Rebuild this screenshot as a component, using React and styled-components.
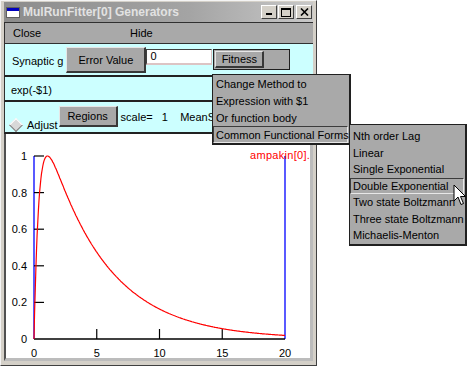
import React from 'react'
import styled, { createGlobalStyle } from 'styled-components'

const GlobalStyle = createGlobalStyle`
  html, body {
    margin: 0;
    padding: 0;
    background: #fff;
  }
  body {
    font-family: "Liberation Sans", Arial, sans-serif;
    font-size: 11px;
    color: #000;
  }
`

const Screen = styled.div`
  position: relative;
  width: 467px;
  height: 367px;
  overflow: hidden;
`

const Window = styled.div`
  width: 317px;
  height: 366px;
  box-sizing: border-box;
  background: #d4d0c8;
  border: 1px solid;
  border-color: #f4f4f4 #404040 #404040 #f4f4f4;
  padding: 1px 3px 0 3px;
  display: flex;
  flex-direction: column;
`

const TitleBar = styled.div`
  height: 20px;
  flex: none;
  display: flex;
  align-items: center;
  padding: 0 1px 0 2px;
  background: linear-gradient(to right, #8c8c8c, #a4a4a4 60%, #c8c8c8);
`

const TitleText = styled.span`
  margin-left: 3px;
  flex: 1;
  font-weight: bold;
  font-size: 12px;
  color: #e2e2e2;
  white-space: nowrap;
`

const CapButton = styled.div`
  width: 14px;
  height: 12px;
  margin-left: ${(p) => p.$gap || 0}px;
  background: #d4d0c8;
  border: 1px solid;
  border-color: #ffffff #404040 #404040 #ffffff;
  display: flex;
  align-items: center;
  justify-content: center;
`

const MenuBar = styled.div`
  height: 20px;
  flex: none;
  display: flex;
  align-items: center;
  background: #a9a9a9;
  border: 1px solid #303030;
  border-right: none;
`

const MenuItem = styled.div`
  width: 117px;
  padding-left: 8px;
  box-sizing: border-box;
`

const Panel = styled.div`
  height: ${(p) => p.$h}px;
  flex: none;
  display: flex;
  align-items: flex-start;
  background: #ccffff;
  border-left: 1px solid #303030;
  border-bottom: 2px solid #222;
  padding-left: ${(p) => p.$pad}px;
  overflow: hidden;
  white-space: nowrap;
`

const Label = styled.span`
  display: block;
  line-height: 13px;
  margin-top: ${(p) => p.$top || 0}px;
  margin-left: ${(p) => p.$left || 0}px;
  white-space: pre;
`

const Button = styled.div`
  width: ${(p) => p.$w}px;
  height: ${(p) => p.$hgt}px;
  margin-top: ${(p) => p.$top || 0}px;
  margin-left: ${(p) => p.$left || 0}px;
  box-sizing: border-box;
  background: #a8a8a8;
  border-style: solid;
  border-width: 1px 2px 2px 1px;
  border-color: #e6e6e6 #383838 #383838 #e6e6e6;
  display: flex;
  align-items: center;
  justify-content: center;
  flex: none;
`

const Input = styled.div`
  width: 66px;
  height: 16px;
  margin-top: 5px;
  box-sizing: border-box;
  background: #fff;
  border-style: solid;
  border-width: 1px 1px 2px 1px;
  border-color: #404040 #d8c0c0 #dcc4c4 #404040;
  padding-left: 3px;
  line-height: 13px;
  flex: none;
`

const OptionBox = styled.div`
  width: 77px;
  height: 21px;
  margin-top: 5px;
  margin-left: 1px;
  box-sizing: border-box;
  background: #a8a8a8;
  border: 1px solid #202020;
  padding: 1px;
  flex: none;
`

const Diamond = styled.div`
  width: 13px;
  height: 13px;
  margin-top: 16px;
  margin-left: 4px;
  display: flex;
  align-items: center;
  justify-content: center;
  flex: none;
  &::before {
    content: '';
    width: 8px;
    height: 8px;
    transform: rotate(45deg);
    background: #d8d8d8;
    border: 1px solid;
    border-color: #ffffff #808080 #808080 #ffffff;
  }
`

const PlotFrame = styled.div`
  height: 224px;
  flex: none;
  background: #fff;
  border-left: 2px solid #505050;
  border-right: 3px solid #bcbcbc;
  border-bottom: 3px solid #bcbcbc;
  overflow: hidden;
`

const Popup = styled.div`
  position: absolute;
  left: ${(p) => p.$x}px;
  top: ${(p) => p.$y}px;
  width: ${(p) => p.$w}px;
  box-sizing: border-box;
  background: #a9a9a9;
  border: 1px solid #202020;
  border-right-width: 2px;
  border-bottom-width: 2px;
  padding-top: ${(p) => p.$pt}px;
  white-space: nowrap;
  overflow: hidden;
`

const PopupItem = styled.div`
  height: ${(p) => p.$h}px;
  box-sizing: border-box;
  margin-right: 1px;
  padding-left: 2px;
  display: flex;
  align-items: center;
  border: 1px solid transparent;
  ${(p) =>
    p.$active &&
    `
    border-color: #3c3c3c #e8e8e8 #e8e8e8 #3c3c3c;
  `}
`

const Cursor = styled.svg`
  position: absolute;
  left: 453px;
  top: 184px;
`

const yTicks = [
  { v: 1, label: '1' },
  { v: 0.8, label: '0.8' },
  { v: 0.6, label: '0.6' },
  { v: 0.4, label: '0.4' },
  { v: 0.2, label: '0.2' },
  { v: 0, label: '0' },
]
const xTicks = [0, 5, 10, 15, 20]

const X0 = 34
const XS = (285 - 34) / 20
const Y0 = 339
const YS = 183

const tauR = 0.4
const tauD = 4.7
const dbl = (t) => Math.exp(-t / tauD) - Math.exp(-t / tauR)
const tPeak = (Math.log(tauD / tauR) * tauD * tauR) / (tauD - tauR)
const peak = dbl(tPeak)

const curve = []
for (let i = 0; i <= 400; i++) {
  const t = i * 0.05
  curve.push(`${(X0 + t * XS).toFixed(1)},${(Y0 - (dbl(t) / peak) * YS).toFixed(1)}`)
}

const Chart = () => (
  <svg width="304" height="224" style={{ display: 'block' }}>
    <g transform="translate(-6,-134)" fontFamily="Liberation Sans, Arial, sans-serif" fontSize="11">
      <line x1={X0} y1={156} x2={X0} y2={Y0} stroke="#0000ff" strokeWidth="1.3" />
      <line x1={285} y1={156} x2={285} y2={Y0} stroke="#0000ff" strokeWidth="1.3" />
      <line x1={X0} y1={Y0} x2={285} y2={Y0} stroke="#000" strokeWidth="1.3" />
      {yTicks.map((t) => (
        <g key={t.label}>
          {t.v > 0 && (
            <line x1={X0} y1={Y0 - t.v * YS} x2={X0 + 10} y2={Y0 - t.v * YS} stroke="#000" strokeWidth="1.2" />
          )}
          <text x={27} y={Y0 - t.v * YS + 4} textAnchor="end">
            {t.label}
          </text>
        </g>
      ))}
      {xTicks.map((v) => (
        <g key={v}>
          {v > 0 && v < 20 && (
            <line x1={X0 + v * XS} y1={Y0 - 10} x2={X0 + v * XS} y2={Y0} stroke="#000" strokeWidth="1.2" />
          )}
          <text x={X0 + v * XS} y={356.5} textAnchor="middle">
            {v}
          </text>
        </g>
      ))}
      <polyline points={curve.join(' ')} fill="none" stroke="#ff0000" strokeWidth="1.2" />
      <text x={250} y={159} fill="#ff0000" letterSpacing="0.3">
        ampakin[0].g
      </text>
    </g>
  </svg>
)

const WinIcon = () => (
  <svg width="14" height="11" style={{ flex: 'none' }}>
    <rect x="0.5" y="0.5" width="13" height="10" fill="#fff" stroke="#606060" />
    <rect x="1" y="1" width="12" height="3" fill="#0000c0" />
  </svg>
)

const fitnessItems = ['Change Method to', 'Expression with $1', 'Or function body', 'Common Functional Forms']
const formItems = [
  'Nth order Lag',
  'Linear',
  'Single Exponential',
  'Double Exponential',
  'Two state Boltzmann',
  'Three state Boltzmann',
  'Michaelis-Menton',
]

export default function App() {
  return (
    <Screen>
      <GlobalStyle />
      <Window>
        <TitleBar>
          <WinIcon />
          <TitleText>MulRunFitter[0] Generators</TitleText>
          <CapButton>
            <svg width="8" height="8">
              <rect x="1" y="5" width="6" height="2" fill="#000" />
            </svg>
          </CapButton>
          <CapButton $gap={1}>
            <svg width="10" height="9">
              <rect x="0.5" y="0.5" width="9" height="8" fill="none" stroke="#000" />
              <rect x="0" y="0" width="10" height="2" fill="#000" />
            </svg>
          </CapButton>
          <CapButton $gap={2}>
            <svg width="9" height="8">
              <path d="M1 0.5 L8 7.5 M8 0.5 L1 7.5" stroke="#000" strokeWidth="1.6" />
            </svg>
          </CapButton>
        </TitleBar>
        <MenuBar>
          <MenuItem>Close</MenuItem>
          <MenuItem>Hide</MenuItem>
        </MenuBar>
        <Panel $h={31} $pad={7}>
          <Label $top={11}>Synaptic g</Label>
          <Button $w={80} $hgt={26} $top={3} $left={3}>
            Error Value
          </Button>
          <Input>0</Input>
          <OptionBox>
            <Button $w={49} $hgt={17}>
              Fitness
            </Button>
          </OptionBox>
        </Panel>
        <Panel $h={23} $pad={6}>
          <Label $top={7}>exp(-$1)</Label>
        </Panel>
        <Panel $h={30} $pad={0}>
          <Diamond />
          <Label $top={17} $left={5}>
            Adjust
          </Label>
          <Button $w={59} $hgt={21} $top={4} $left={1}>
            Regions
          </Button>
          <Label $top={9} $left={3}>
            {'scale=   1    MeanSqErr'}
          </Label>
        </Panel>
        <PlotFrame>
          <Chart />
        </PlotFrame>
      </Window>

      <Popup $x={212} $y={74} $w={139} $pt={0}>
        {fitnessItems.map((t, i) => (
          <PopupItem key={t} $h={17} $active={i === 3}>
            {t}
          </PopupItem>
        ))}
      </Popup>

      <Popup $x={349} $y={124} $w={118} $pt={3}>
        {formItems.map((t, i) => (
          <PopupItem key={t} $h={16.5} $active={i === 3}>
            {t}
          </PopupItem>
        ))}
      </Popup>

      <Cursor width="14" height="22" viewBox="0 0 14 22">
        <path d="M1 1 L1 17 L5 13 L8 20.5 L10.5 19.5 L7.5 12.5 L12.5 12.5 Z" fill="#fff" stroke="#000" strokeWidth="1" />
      </Cursor>
    </Screen>
  )
}
